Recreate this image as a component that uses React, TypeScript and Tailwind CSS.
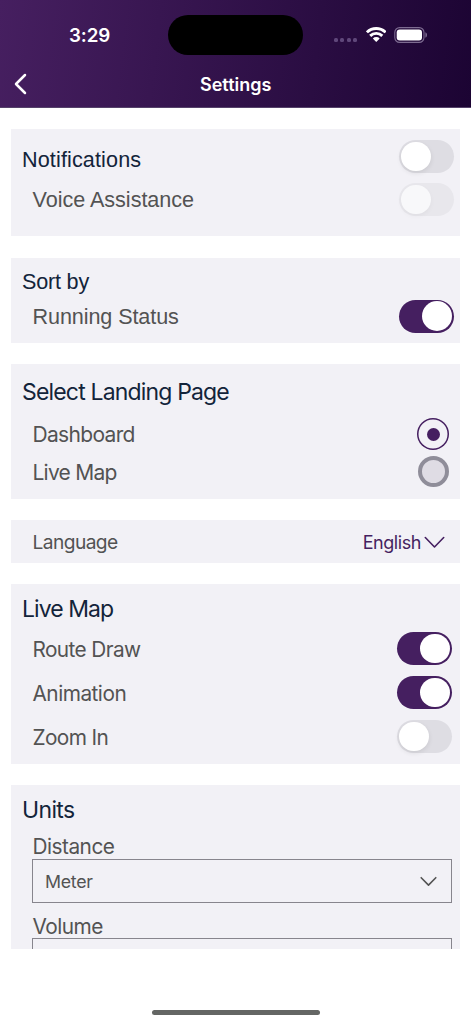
import type { ReactNode } from 'react';

const sf = "font-['Inter',sans-serif]";
const helv = "font-['Liberation_Sans',sans-serif]";

function Toggle({ on = false, dim = false }: { on?: boolean; dim?: boolean }) {
  return (
    <div
      className={`flex h-[33px] w-[54.5px] shrink-0 items-center rounded-full px-[2px] ${
        on ? 'justify-end bg-[#451f60]' : dim ? 'bg-[#e8e7ec]' : 'bg-[#dedde3]'
      }`}
    >
      <div
        className={`size-[29.5px] rounded-full ${
          dim
            ? 'bg-[#f8f8fa] shadow-[0_2px_5px_rgba(0,0,0,0.04)]'
            : on
              ? 'bg-white'
              : 'bg-white shadow-[0_2px_5px_rgba(0,0,0,0.09)]'
        }`}
      />
    </div>
  );
}

function Card({ className = '', children }: { className?: string; children: ReactNode }) {
  return <section className={`flex flex-col bg-[#f2f1f6] ${className}`}>{children}</section>;
}

function StatusBar() {
  return (
    <div className="flex h-[70px] items-center text-white">
      <span className="ml-[69px] w-[99.3px] pt-[3px] text-[18.8px] font-semibold leading-none tracking-[-0.1px]">3:29</span>
      <div className="h-[39.5px] w-[134.4px] rounded-full bg-black" />
      <div className="ml-[31.3px] mt-[10px] flex w-[32px] gap-[2.4px]">
        {[0, 1, 2, 3].map((i) => (
          <i key={i} className="size-1 rounded-[1.5px] bg-[#5f477a]" />
        ))}
      </div>
      <svg className="-mt-[1px] h-[15px] w-[20.5px]" viewBox="0 0 20.5 15">
        <g fill="none" stroke="#fff" strokeWidth="2.9">
          <path d="M.9 5.3a13.3 13.3 0 0 1 18.7 0" />
          <path d="M4.2 8.9a8.6 8.6 0 0 1 12.1 0" />
        </g>
        <path fill="#fff" d="M6.8 11.5a4.9 4.9 0 0 1 6.9 0L10.25 15z" />
      </svg>
      <svg className="ml-[8px] h-[17px] w-[34px]" viewBox="0 0 34 17">
        <rect x=".8" y=".6" width="29.2" height="14.8" rx="4.8" fill="none" stroke="#7d6b91" strokeWidth="1.1" />
        <rect x="2.7" y="2.6" width="25.3" height="10.8" rx="3" fill="#fff" />
        <path fill="#7d6b91" d="M31.4 5.3c1 .4 1.6 1.5 1.6 2.7s-.6 2.3-1.6 2.7z" />
      </svg>
    </div>
  );
}

function NavBar() {
  return (
    <div className="flex h-[28px] items-center text-white">
      <svg className="ml-[13px] h-[22px] w-[15px]" viewBox="0 0 15 22">
        <path
          d="M12 2 3 11l9 9"
          fill="none"
          stroke="#fff"
          strokeWidth="2.5"
          strokeLinecap="round"
          strokeLinejoin="round"
        />
      </svg>
      <h1 className="ml-[172px] whitespace-nowrap pt-[1px] text-[18px] font-semibold leading-none">Settings</h1>
    </div>
  );
}

function Chevron({ className, path, box }: { className: string; path: string; box: string }) {
  return (
    <svg className={className} viewBox={box}>
      <path d={path} fill="none" stroke="currentColor" strokeWidth="1.6" strokeLinecap="round" strokeLinejoin="round" />
    </svg>
  );
}

export default function App() {
  return (
    <div className={`flex h-[1024px] w-[471px] flex-col overflow-hidden bg-white text-[#535353] ${sf}`}>
      <header className="h-[107.5px] shrink-0 border-b border-[#55426a] bg-[linear-gradient(97deg,#461f60_0%,#1c0433_100%)]">
        <StatusBar />
        <NavBar />
      </header>

      <main className="mx-[11px] mt-[21.5px] flex h-[820px] w-[449px] shrink-0 flex-col gap-[21.5px] overflow-hidden">
        <Card className={`h-[107px] shrink-0 pl-[11px] pr-[6.5px] pt-[11px] text-[21.6px] leading-none ${helv}`}>
          <div className="flex h-[33px] justify-between">
            <h2 className="pt-[9px] tracking-[0.12px] text-[#13243a]">Notifications</h2>
            <Toggle />
          </div>
          <div className="mt-[10px] flex h-[33px] items-center justify-between pl-[10.5px]">
            <span className="pt-[1px] tracking-[-0.03px]">Voice Assistance</span>
            <Toggle dim />
          </div>
        </Card>

        <Card className={`h-[85px] shrink-0 pl-[11px] pr-[6.5px] text-[21.6px] leading-none tracking-[-0.1px] ${helv}`}>
          <h2 className="h-[42px] pt-[13.5px] tracking-[-0.2px] text-[#13243a]">Sort by</h2>
          <div className="flex h-[33px] items-center justify-between pl-[10.5px]">
            <span className="pt-[1px]">Running Status</span>
            <Toggle on />
          </div>
        </Card>

        <Card className="h-[134.5px] shrink-0 pl-[11px] pt-[17px] leading-none">
          <h2 className="h-[37px] text-[23px] tracking-[-0.83px] text-[#13243a]">Select Landing Page</h2>
          <div className="flex h-[32px] items-center justify-between pl-[10.5px] pr-[11px]">
            <span className="pt-[1px] text-[21px] tracking-[-0.68px]">Dashboard</span>
            <div className="flex size-[32px] items-center justify-center rounded-full shadow-[inset_0_0_0_1.5px_#451f60]">
              <div className="size-[13px] rounded-full bg-[#451f60]" />
            </div>
          </div>
          <div className="mt-[6px] flex h-[31px] items-center justify-between pl-[10.5px] pr-[11px]">
            <span className="pt-[1px] text-[21px] tracking-[-0.75px]">Live Map</span>
            <div className="size-[31px] rounded-full border-4 border-[#8f8d99] bg-[#dfdce4]" />
          </div>
        </Card>

        <Card className="h-[42.5px] shrink-0 justify-center pl-[21.5px] pr-[15px] leading-none">
          <div className="flex items-center justify-between">
            <span className="pt-[3px] text-[19.2px] tracking-[-0.58px]">Language</span>
            <div className="flex items-center text-[#451f60]">
              <span className="pt-[3px] text-[18px] tracking-[-0.43px]">English</span>
              <Chevron className="ml-[3px] mt-[2px] h-[13px] w-[21px]" box="0 0 21 13" path="m1.3 1.5 9.2 9.5 9.2-9.5" />
            </div>
          </div>
        </Card>

        <Card className="h-[179.5px] shrink-0 pl-[11px] pr-[8.5px] leading-none">
          <h2 className="h-[48px] pt-[13.5px] text-[23px] tracking-[-0.95px] text-[#13243a]">Live Map</h2>
          <div className="flex flex-col gap-[11px] pl-[10.5px] text-[20.8px]">
            <div className="flex h-[33px] items-center justify-between">
              <span className="pt-[3px] tracking-[-0.6px]">Route Draw</span>
              <Toggle on />
            </div>
            <div className="flex h-[33px] items-center justify-between">
              <span className="pt-[3px] tracking-[-0.5px]">Animation</span>
              <Toggle on />
            </div>
            <div className="flex h-[33px] items-center justify-between">
              <span className="pt-[3px] tracking-[-0.6px]">Zoom In</span>
              <Toggle />
            </div>
          </div>
        </Card>

        <Card className="h-[260px] shrink-0 pl-[11px] pr-[8.5px] leading-none">
          <h2 className="h-[51px] pt-[14px] text-[23px] tracking-[-0.65px] text-[#13243a]">Units</h2>
          <div className="flex flex-col pl-[10px] text-[20.8px] tracking-[-0.5px]">
            <span className="h-[22.5px] pl-[0.5px] pt-[1px]">Distance</span>
            <div className="flex h-[44px] items-center justify-between border border-[#87858d] pl-[12px] pr-[14px]">
              <span className="pt-[2px] text-[17.8px] tracking-[-0.3px]">Meter</span>
              <Chevron className="mt-px h-[11px] w-[17px]" box="0 0 17 11" path="m1.2 1.7 7.3 7.4 7.3-7.4" />
            </div>
            <span className="mt-[12.5px] h-[23px] pl-[0.5px] pt-[1.5px]">Volume</span>
            <div className="h-[44px] border border-[#87858d]" />
          </div>
        </Card>
      </main>

      <div className="mx-auto mt-[60.5px] h-[5.5px] w-[168px] shrink-0 rounded-full bg-[#646664]" />
    </div>
  );
}
